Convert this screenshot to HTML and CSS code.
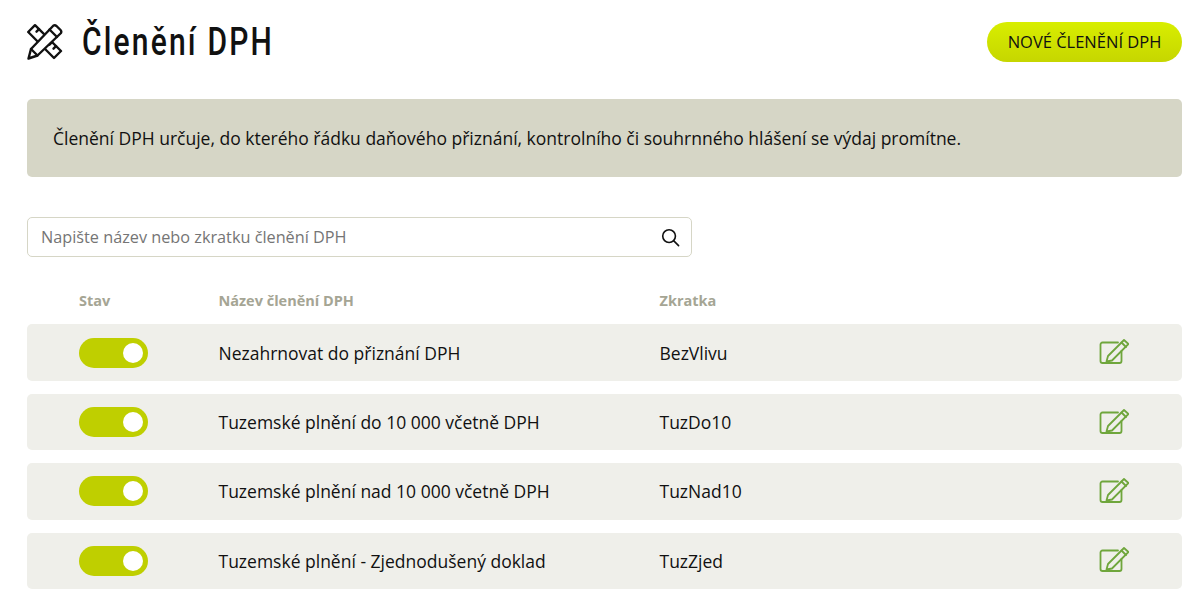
FILE: index.html
```html
<!DOCTYPE html>
<html lang="cs">
<head>
<meta charset="utf-8">
<title>Členění DPH</title>
<link rel="stylesheet" href="styles.css">
</head>
<body>
<main class="page">
  <header class="top">
    <div class="title-wrap">
      <svg class="title-icon" viewBox="0 0 36 36" fill="none" stroke="#111" stroke-width="2.400" stroke-linejoin="round" stroke-linecap="round">
        <path d="M8 1.200 1.200 8 27 34 34 27Z"/>
        <path d="M12 5.200 9.500 7.700M25 18.200l-2.500 2.500M29 22.200l-2.500 2.500"/>
        <path d="M26.500 1.500Q28 .8 29.500 2L33.500 6Q34.800 7.500 34 9L10.500 31.500 1.500 34.500 4 25Z" fill="#fff"/>
        <path d="M22.500 5.500 30 13M4 25l6.500 6.500"/>
      </svg>
      <h1 class="title">Členění DPH</h1>
    </div>
    <button class="btn-new">NOVÉ ČLENĚNÍ DPH</button>
  </header>

  <p class="notice">Členění DPH určuje, do kterého řádku daňového přiznání, kontrolního či souhrnného hlášení se výdaj promítne.</p>

  <div class="search">
    <span class="search-placeholder">Napište název nebo zkratku členění DPH</span>
    <svg class="search-icon" viewBox="0 0 20 20" fill="none" stroke="#111" stroke-width="1.700" stroke-linecap="round">
      <circle cx="8.500" cy="8.500" r="6.700"/>
      <path d="M13.500 13.500 18.500 18.500"/>
    </svg>
  </div>

  <div class="table-head">
    <span>Stav</span>
    <span>Název členění DPH</span>
    <span>Zkratka</span>
  </div>

  <div class="rows">
    <div class="row">
      <span class="toggle"><span class="knob"></span></span>
      <span>Nezahrnovat do přiznání DPH</span>
      <span>BezVlivu</span>
      <svg class="edit" viewBox="0 0 30 27" fill="none" stroke="#6fa63c" stroke-width="1.800" stroke-linejoin="round" stroke-linecap="round"><path d="M19 3.500H3.500A2 2 0 0 0 1.500 5.500V22a2 2 0 0 0 2 2H20.500a2 2 0 0 0 2-2V12"/><path d="M25 1 29.500 5 13 21.500 7.500 22.500 9 17Z"/><path d="M22.500 3.500 27 8"/></svg>
    </div>
    <div class="row">
      <span class="toggle"><span class="knob"></span></span>
      <span>Tuzemské plnění do 10 000 včetně DPH</span>
      <span>TuzDo10</span>
      <svg class="edit" viewBox="0 0 30 27" fill="none" stroke="#6fa63c" stroke-width="1.800" stroke-linejoin="round" stroke-linecap="round"><path d="M19 3.500H3.500A2 2 0 0 0 1.500 5.500V22a2 2 0 0 0 2 2H20.500a2 2 0 0 0 2-2V12"/><path d="M25 1 29.500 5 13 21.500 7.500 22.500 9 17Z"/><path d="M22.500 3.500 27 8"/></svg>
    </div>
    <div class="row">
      <span class="toggle"><span class="knob"></span></span>
      <span>Tuzemské plnění nad 10 000 včetně DPH</span>
      <span>TuzNad10</span>
      <svg class="edit" viewBox="0 0 30 27" fill="none" stroke="#6fa63c" stroke-width="1.800" stroke-linejoin="round" stroke-linecap="round"><path d="M19 3.500H3.500A2 2 0 0 0 1.500 5.500V22a2 2 0 0 0 2 2H20.500a2 2 0 0 0 2-2V12"/><path d="M25 1 29.500 5 13 21.500 7.500 22.500 9 17Z"/><path d="M22.500 3.500 27 8"/></svg>
    </div>
    <div class="row">
      <span class="toggle"><span class="knob"></span></span>
      <span>Tuzemské plnění - Zjednodušený doklad</span>
      <span>TuzZjed</span>
      <svg class="edit" viewBox="0 0 30 27" fill="none" stroke="#6fa63c" stroke-width="1.800" stroke-linejoin="round" stroke-linecap="round"><path d="M19 3.500H3.500A2 2 0 0 0 1.500 5.500V22a2 2 0 0 0 2 2H20.500a2 2 0 0 0 2-2V12"/><path d="M25 1 29.500 5 13 21.500 7.500 22.500 9 17Z"/><path d="M22.500 3.500 27 8"/></svg>
    </div>
  </div>
</main>
</body>
</html>
```
FILE: styles.css
```css
* { box-sizing: border-box; }
html, body { margin: 0; background: #fff; }
body { font-family: "Open Sans", "Liberation Sans", sans-serif; color: #111; overflow: hidden; }
.page { padding: 22px 15px 0 27px; height: 607px; }
.top { display: flex; justify-content: space-between; align-items: center; height: 40px; }
.title-wrap { display: flex; align-items: center; gap: 19px; }
.title-icon { width: 36px; height: 36px; display: block; }
.title { margin: 0; font-family: Roboto, sans-serif; font-weight: 500; font-size: 39px; line-height: 40px; letter-spacing: 2.800px; transform: scaleX(.77); transform-origin: left center; width: 190px; white-space: nowrap; }
.btn-new { width: 195px; height: 40px; border: 0; border-radius: 20px; background: linear-gradient(#d8ee00, #c6d600); color: #111; font-family: inherit; font-size: 16.500px; font-weight: 400; padding: 0 0 2px; }
.notice { margin: 37px 0 0; height: 78px; background: #d6d6c6; border-radius: 5px; padding: 0 26px; display: flex; align-items: center; font-size: 17.500px; }
.search { margin-top: 40px; width: 665px; height: 40px; border: 1px solid #d6d6c6; border-radius: 5px; display: flex; justify-content: space-between; align-items: center; padding: 0 11px 0 13px; }
.search-placeholder { font-size: 16.250px; color: #757575; }
.search-icon { width: 19px; height: 19px; display: block; }
.table-head, .row { display: grid; grid-template-columns: 139.500px 441px 1fr auto; padding-left: 52px; align-items: center; }
.table-head { margin-top: 33px; height: 20px; font-size: 14.500px; font-weight: 700; color: #a5a594; }
.rows { margin-top: 14.450px; display: flex; flex-direction: column; gap: 13px; }
.row { height: 56.400px; background: #efefea; border-radius: 5px; padding-right: 53px; font-size: 17.500px; }
.toggle { width: 69px; height: 30px; background: #bfcf00; border-radius: 15px; display: flex; justify-content: flex-end; align-items: center; padding-right: 5px; }
.knob { width: 20px; height: 20px; border-radius: 50%; background: #fff; }
.edit { width: 30px; height: 27px; display: block; }
```
